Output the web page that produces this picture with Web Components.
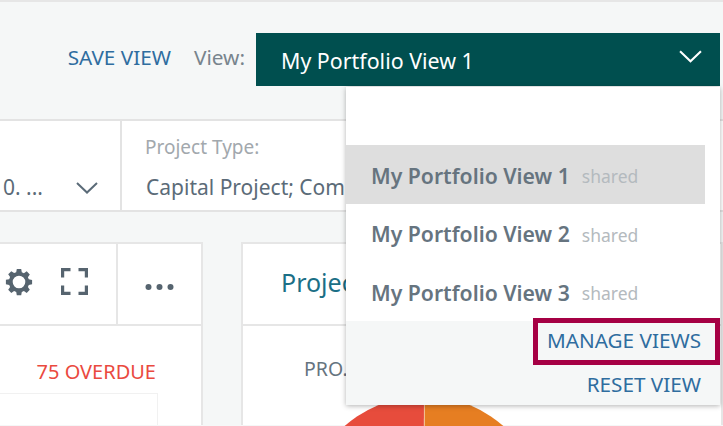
<!DOCTYPE html>
<html>
<head>
<meta charset="utf-8">
<title>Portfolio</title>
<style>
  html, body { margin: 0; height: 426px; overflow: hidden; background: #f5f7f7; }
  body { font-family: "Noto Sans", "Open Sans", sans-serif; }
</style>
</head>
<body>
<portfolio-page></portfolio-page>

<script>
const CHEVRON = (color, w) => `<svg width="${w}" height="${Math.round(w * 0.55)}" viewBox="0 0 22 12" fill="none" stroke="${color}" stroke-width="2"><path d="M1 1l10 9.5L21 1"/></svg>`;

class ViewItem extends HTMLElement {
  constructor() {
    super();
    this.attachShadow({ mode: "open" });
    this.shadowRoot.innerHTML = `
      <style>
        :host {
          display: flex;
          align-items: center;
          box-sizing: border-box;
          height: 58.5px;
          padding: 2px 0 0 25px;
          margin-right: 15px;
          color: #66747f;
          font-size: 21.2px;
          font-weight: 600;
          white-space: nowrap;
        }
        :host([selected]) { background: #dedede; }
        .tag {
          margin-left: 12px;
          margin-top: 2px;
          color: #b4babe;
          font-size: 17.5px;
          font-weight: 400;
        }
      </style>
      <slot></slot><span class="tag">shared</span>
    `;
  }
}
customElements.define("view-item", ViewItem);

class ViewSelect extends HTMLElement {
  constructor() {
    super();
    this.attachShadow({ mode: "open" });
    this.shadowRoot.innerHTML = `
      <style>
        :host { display: block; position: relative; width: 464px; }
        .button {
          display: flex;
          align-items: center;
          justify-content: space-between;
          height: 53px;
          box-sizing: border-box;
          padding: 2px 18px 0 25px;
          background: #004f4f;
          color: #fff;
          font-size: 21.4px;
        }
        .button svg { margin-bottom: 8px; }
        .menu {
          position: absolute;
          top: 54px;
          right: 0;
          width: 374px;
          padding-top: 58px;
          background: #fff;
          box-shadow: 0 1px 5px rgba(0, 0, 0, 0.3);
          z-index: 10;
        }
        .footer {
          display: flex;
          flex-direction: column;
          align-items: flex-end;
          height: 84px;
          background: #f5f7f7;
        }
        .link { color: #2f6d9f; font-size: 20.7px; line-height: 28px; white-space: nowrap; }
        .manage {
          box-sizing: border-box;
          width: 187px;
          height: 47px;
          margin-top: -3px;
          padding-right: 14px;
          padding-bottom: 2px;
          display: flex;
          align-items: center;
          justify-content: flex-end;
          border: 5px solid #a50044;
        }
        .reset { margin: 5px 19px 0 0; }
      </style>
      <div class="button"><span>My Portfolio View 1</span>${CHEVRON("#fff", 23)}</div>
      <div class="menu">
        <slot></slot>
        <div class="footer">
          <span class="link manage">MANAGE VIEWS</span>
          <span class="link reset">RESET VIEW</span>
        </div>
      </div>
    `;
  }
}
customElements.define("view-select", ViewSelect);

class FilterCell extends HTMLElement {
  constructor() {
    super();
    this.attachShadow({ mode: "open" });
    this.shadowRoot.innerHTML = `
      <style>
        :host {
          display: block;
          box-sizing: border-box;
          height: 90px;
          overflow: hidden;
          white-space: nowrap;
        }
        .label { color: #a2a8ad; font-size: 19px; line-height: 22px; height: 22px; padding-top: 15px; }
        .value { display: flex; align-items: center; color: #5b6b78; font-size: 21px; line-height: 24px; margin-top: 17px; }
      </style>
      <div class="label"><slot name="label"></slot></div>
      <div class="value"><slot></slot></div>
    `;
  }
}
customElements.define("filter-cell", FilterCell);

class PanelCard extends HTMLElement {
  constructor() {
    super();
    this.attachShadow({ mode: "open" });
    this.shadowRoot.innerHTML = `
      <style>
        :host {
          display: block;
          box-sizing: border-box;
          background: #fff;
          border: 2px solid #e6e6e6;
          border-bottom: 0;
          height: 183px;
          overflow: hidden;
        }
        .head {
          box-sizing: border-box;
          height: 82px;
          border-bottom: 2px solid #e6e6e6;
          display: flex;
        }
      </style>
      <div class="head"><slot name="head"></slot></div>
      <slot></slot>
    `;
  }
}
customElements.define("panel-card", PanelCard);

class PortfolioPage extends HTMLElement {
  constructor() {
    super();
    this.attachShadow({ mode: "open" });
    this.shadowRoot.innerHTML = `
      <style>
        :host { display: block; position: relative; width: 723px; height: 426px; overflow: hidden; background: #f5f7f7; border-top: 2px solid #e6e6e6; box-sizing: border-box; }
        .toolbar {
          box-sizing: border-box;
          height: 119px;
          padding: 31px 3px 0 0;
          display: flex;
          justify-content: flex-end;
          align-items: flex-start;
          border-bottom: 2px solid #e3e3e3;
        }
        .save { color: #2f6d9f; font-size: 20.7px; line-height: 28px; margin: 10px 23px 0 0; white-space: nowrap; }
        .view { color: #78848d; font-size: 20.8px; line-height: 28px; margin: 10px 11px 0 0; }
        .filters {
          display: grid;
          grid-template-columns: 122px 1fr;
          height: 91px;
          background: #fff;
          border-bottom: 2px solid #e3e3e3;
          box-sizing: border-box;
        }
        .filters filter-cell:first-child { border-right: 2px solid #e3e3e3; }
        .partial { display: flex; justify-content: flex-end; align-items: center; width: 120px; }
        .partial svg { flex: none; margin: 2px 22px 0 33px; }
        .type { padding-left: 23px; }
        .capital { margin-left: 1px; }
        .cards {
          display: grid;
          grid-template-columns: 203px 482px;
          column-gap: 38px;
          padding-top: 30px;
        }
        .left { border-left: 0; }
        .spacer { flex: 1; }
        .tools { display: flex; align-items: center; gap: 28px; padding: 0 28px 5px 0; border-right: 2px solid #e6e6e6; }
        .more { width: 83px; display: flex; align-items: center; justify-content: center; padding-top: 5px; box-sizing: border-box; }
        .overdue { color: #ea4a3f; font-size: 20px; line-height: 26px; text-align: right; padding: 33px 45px 0 0; }
        .box { width: 158px; height: 40px; margin-top: 8px; border: 1px solid #f1f1f1; border-left: 0; box-sizing: border-box; }
        .title { color: #1b6f86; font-size: 25px; line-height: 34px; padding: 21px 0 0 38px; white-space: nowrap; }
        .pro { color: #66747f; font-size: 19.5px; padding: 31px 0 0 61px; line-height: 24px; white-space: nowrap; }
        .pie { position: absolute; left: 304px; top: 392px; }
      </style>
      <div class="toolbar">
        <span class="save">SAVE VIEW</span>
        <span class="view">View:</span>
        <view-select>
          <view-item selected>My Portfolio View 1</view-item>
          <view-item>My Portfolio View 2</view-item>
          <view-item>My Portfolio View 3</view-item>
        </view-select>
      </div>
      <div class="filters">
        <filter-cell>
          <div class="partial"><span>10. ...</span>${CHEVRON("#5b6b78", 22)}</div>
        </filter-cell>
        <filter-cell class="type">
          <span slot="label">Project Type:</span>
          <span class="capital">Capital Project; Com</span>
        </filter-cell>
      </div>
      <div class="cards">
        <panel-card class="left">
          <div slot="head" class="spacer"></div>
          <div slot="head" class="tools">
            <svg width="28" height="28" viewBox="0 0 28 28"><path fill="#56646f" fill-rule="evenodd" d="M11.800 1h4.400l.6 3.300 2.100.9 2.800-1.900 3.100 3.100-1.900 2.800.9 2.100 3.300.6v4.400l-3.300.6-.9 2.100 1.900 2.800-3.100 3.100-2.800-1.900-2.100.9-.6 3.300h-4.400l-.6-3.300-2.100-.9-2.800 1.900-3.100-3.100 1.900-2.800-.9-2.100L.9 16.200v-4.400l3.300-.6.9-2.100-1.900-2.800 3.100-3.100 2.800 1.900 2.100-.9zM14 7.700a6.300 6.300 0 1 0 0 12.600a6.300 6.300 0 0 0 0-12.600z"/></svg>
            <svg width="27" height="27" viewBox="0 0 27 27" fill="none" stroke="#56646f" stroke-width="3.2"><path d="M9.500 1.600H1.600V9.500M17.500 1.600h7.900V9.500M9.500 25.400H1.600V17.500M17.500 25.400h7.900V17.500"/></svg>
          </div>
          <div slot="head" class="more">
            <svg width="29" height="8" viewBox="0 0 29 8" fill="#56646f"><circle cx="3.500" cy="4" r="3"/><circle cx="14.500" cy="4" r="3"/><circle cx="25.500" cy="4" r="3"/></svg>
          </div>
          <div class="overdue">75 OVERDUE</div>
          <div class="box"></div>
        </panel-card>
        <panel-card>
          <div slot="head" class="title">Projec</div>
          <div class="pro">PRO.</div>
        </panel-card>
      </div>
      <svg class="pie" width="240" height="34" viewBox="0 0 240 34">
        <path d="M120 2A120 120 0 0 0 0 122H119.500z" fill="#e74c3c"/>
        <path d="M120.500 2A120 120 0 0 1 240 122H120.500z" fill="#e67e22"/>
      </svg>
    `;
  }
}
customElements.define("portfolio-page", PortfolioPage);
</script>
</body>
</html>
